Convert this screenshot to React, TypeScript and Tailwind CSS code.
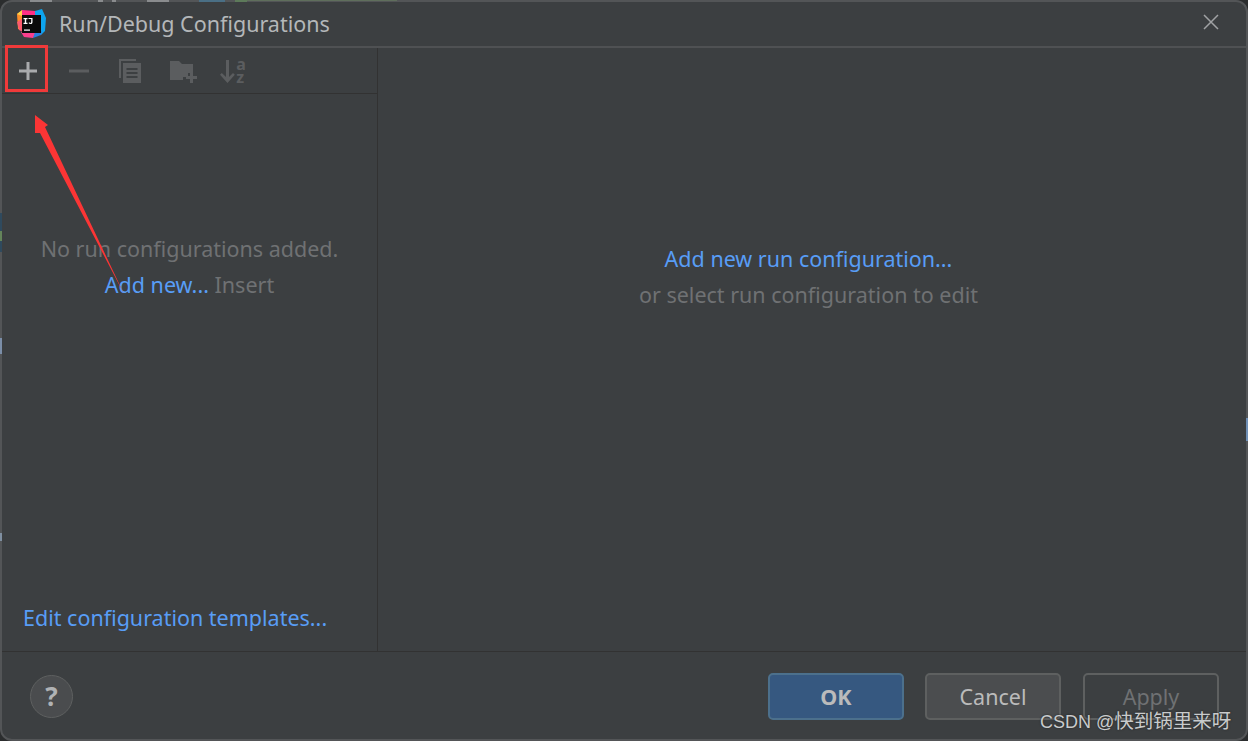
import React from 'react';

const font = { fontFamily: '"Noto Sans", "Noto Sans CJK SC", sans-serif' };

const Logo = () => <svg width="32" height="32" viewBox="0 0 32 32" className="shrink-0">
    <polygon points="2,6 8,2 8,23 3,21" fill="#ff8f2a" />
    <polygon points="2,6 7,2 10,4 7,8" fill="#ffd24a" />
    <polygon points="7,2 20,3 20,8 7,8" fill="#fe2f86" />
    <polygon points="2,14 8,10 8,24 4,22" fill="#fd5a6e" />
    <polygon points="20,3 27,1 31,10 30,23 26,27 25,8 20,8" fill="#0ea5ef" />
    <polygon points="6,24 22,24 18,30 9,29" fill="#fc3f8d" />
    <polygon points="20,24 27,23 26,27 18,30" fill="#2a7fe0" />
    <rect x="7" y="7" width="19" height="18" fill="#0b0b0b" />
    <rect x="9" y="21.500" width="6" height="1.200" fill="#fff" />
    <path d="M8.500 10h4v1.200h-1.300v3.600h1.300V16h-4v-1.200h1.300v-3.600H8.500z" fill="#fff" />
    <path d="M13.500 10h4v4.200c0 1.300-.8 1.900-2 1.900-.9 0-1.600-.4-2-1.100l.9-.7c.2.400.6.600 1 .6.500 0 .8-.3.800-.8v-3h-2.700z" fill="#fff" />
</svg>;

const Toolbar = () => <div className="h-[46px] flex items-center pl-[3px] border-b border-[#323232]">
    <div className="w-[45px] h-[46px] flex items-center justify-center">
        <svg width="20" height="20" viewBox="0 0 20 20"><path d="M8.500 1h3v7.500H19v3h-7.500V19h-3v-7.500H1v-3h7.500z" fill="#a9abad" /></svg>
    </div>
    <div className="w-[53px] flex justify-center pl-[5px]">
        <svg width="20" height="20" viewBox="0 0 20 20"><rect x="0" y="8.500" width="20" height="3" fill="#5b5d5f" /></svg>
    </div>
    <div className="w-[54px] flex justify-center">
        <svg width="24" height="26" viewBox="0 0 24 26" fill="#5b5d5f">
            <path d="M1 1h17v2H3v17H1z" />
            <path d="M5 5h18v20H5zM8.500 10v2h11v-2zM8.500 14v2h11v-2zM8.500 18v2h11v-2z" fillRule="evenodd" />
        </svg>
    </div>
    <div className="w-[53px] flex justify-center">
        <svg width="28" height="24" viewBox="0 0 28 24" fill="#5b5d5f">
            <path d="M0 2h9l3 3h11v9h-5v4h-5v3H0z" />
            <path d="M20 13h3v4h4v3h-4v4h-3v-4h-4v-3h4z" />
        </svg>
    </div>
    <div className="w-[46px] flex justify-center items-center gap-[1px]">
        <svg width="15" height="26" viewBox="0 0 15 26" fill="#5b5d5f">
            <path d="M6 2h3v17l4-4 1.800 1.800L7.500 25 0 16.800 1.800 15 6 19z" />
        </svg>
        <div className="flex flex-col text-[16px] leading-[13px] font-bold text-[#5b5d5f]">
            <span>a</span>
            <span>z</span>
        </div>
    </div>
</div>;

const Button = ({ children, className }: { children: string, className: string }) => <div className={`w-[136px] h-[47px] pt-[1px] rounded-[5px] border-2 flex items-center justify-center text-[21.500px] ${className}`}>
    {children}
</div>;

// bits of the window behind the dialog that show at its edge
const Behind = ({ className }: { className: string }) => <div className={`absolute ${className}`} />;

export default function App() {
    return <div className="relative w-[1248px] h-[741px] overflow-hidden bg-[#2b2d2e]" style={font}>
        <div className="h-full flex flex-col bg-[#3c3f41] border-2 border-[#535557] rounded-[12px]">
            {/* title bar */}
            <div className="h-[46px] shrink-0 flex items-center pl-[13px] pr-[27px] border-b-2 border-[#4f5153]">
                <Logo />
                <span className="ml-[12px] text-[21.500px] text-[#b4b7b9]">Run/Debug Configurations</span>
                <svg width="16" height="16" viewBox="0 0 16 16" className="ml-auto -mt-[5px]"><path d="M1 1l14 14M15 1L1 15" stroke="#a0a2a4" strokeWidth="1.500" /></svg>
            </div>

            <div className="flex-1 flex min-h-0">
                {/* left panel */}
                <div className="w-[376px] shrink-0 flex flex-col border-r border-[#323232]">
                    <Toolbar />
                    <div className="flex-1 flex flex-col items-center pt-[137px] text-[21.500px] leading-[36px] text-[#6f7173]">
                        <span>No run configurations added.</span>
                        <span><span className="text-[#589df6]">Add new...</span> Insert</span>
                    </div>
                    <div className="h-[51px] pl-[21px] text-[21.500px] leading-[36px] text-[#589df6]">Edit configuration templates...</div>
                </div>
                {/* right panel */}
                <div className="flex-1 flex flex-col items-center pt-[193px] pr-[7px] text-[21.500px] leading-[36px] text-[#6f7173]">
                    <span className="text-[#589df6]">Add new run configuration...</span>
                    <span>or select run configuration to edit</span>
                </div>
            </div>

            {/* footer */}
            <div className="h-[88px] shrink-0 flex items-start border-t border-[#323232] pt-[21px] pl-[28px] pr-[27px]">
                <div className="w-[43px] h-[43px] mt-[2px] rounded-full bg-[#4a4c4e] border border-[#5e6060] flex items-center justify-center text-[26px] font-bold text-[#b0b2b4]">?</div>
                <div className="ml-auto flex gap-[21px]">
                    <Button className="bg-[#365880] border-[#4c708c] text-[#bbbbbb] font-bold">OK</Button>
                    <Button className="bg-[#4b4d4f] border-[#5e6060] text-[#bbbbbb]">Cancel</Button>
                    <Button className="ml-[1px] border-[#5e6060] text-[#6f7173]">Apply</Button>
                </div>
            </div>
        </div>

        <Behind className="left-[30px] top-0 w-[22px] h-[2px] bg-[#8a8c8e]" />
        <Behind className="left-[98px] top-0 w-[5px] h-[2px] bg-[#8a8c8e]" />
        <Behind className="left-[112px] top-0 w-[4px] h-[2px] bg-[#8a8c8e]" />
        <Behind className="left-[147px] top-0 w-[22px] h-[2px] bg-[#8a8c8e]" />
        <Behind className="left-[199px] top-0 w-[26px] h-[2px] bg-[#4a6f85]" />
        <Behind className="left-[235px] top-0 w-[12px] h-[2px] bg-[#5d7a5a]" />
        <Behind className="left-[247px] top-0 w-[150px] h-[1px] bg-[#5f6e5c]" />
        <Behind className="left-0 top-[213px] w-[2px] h-[39px] bg-[#2f4a5e]" />
        <Behind className="left-0 top-[231px] w-[2px] h-[10px] bg-[#64845a]" />
        <Behind className="left-0 top-[338px] w-[2px] h-[16px] bg-[#7b8ea8]" />
        <Behind className="left-0 top-[533px] w-[2px] h-[8px] bg-[#7f8fa0]" />
        <Behind className="right-0 top-[418px] w-[2px] h-[23px] bg-[#6f8fb5]" />

        {/* annotations over the screenshot */}
        <div className="absolute left-[5px] top-[45px] w-[43px] h-[47px] border-[3px] border-[#f03a3a]" />
        <svg width="130" height="200" viewBox="0 0 130 200" className="absolute left-0 top-[100px]">
            <polygon points="35,15 48,25 45,27 124,194 40,33 35,33" fill="#fb3535" />
        </svg>
        <span className="absolute left-[1040px] top-[708px] text-[18px] leading-[26px] text-[#c9cbcc] [text-shadow:0_0_2px_#222222]" style={{ fontFamily: '"Liberation Sans", "Noto Sans CJK SC", sans-serif' }}>CSDN @<span className="text-[19.500px]">快到锅里来呀</span></span>
    </div>;
}
